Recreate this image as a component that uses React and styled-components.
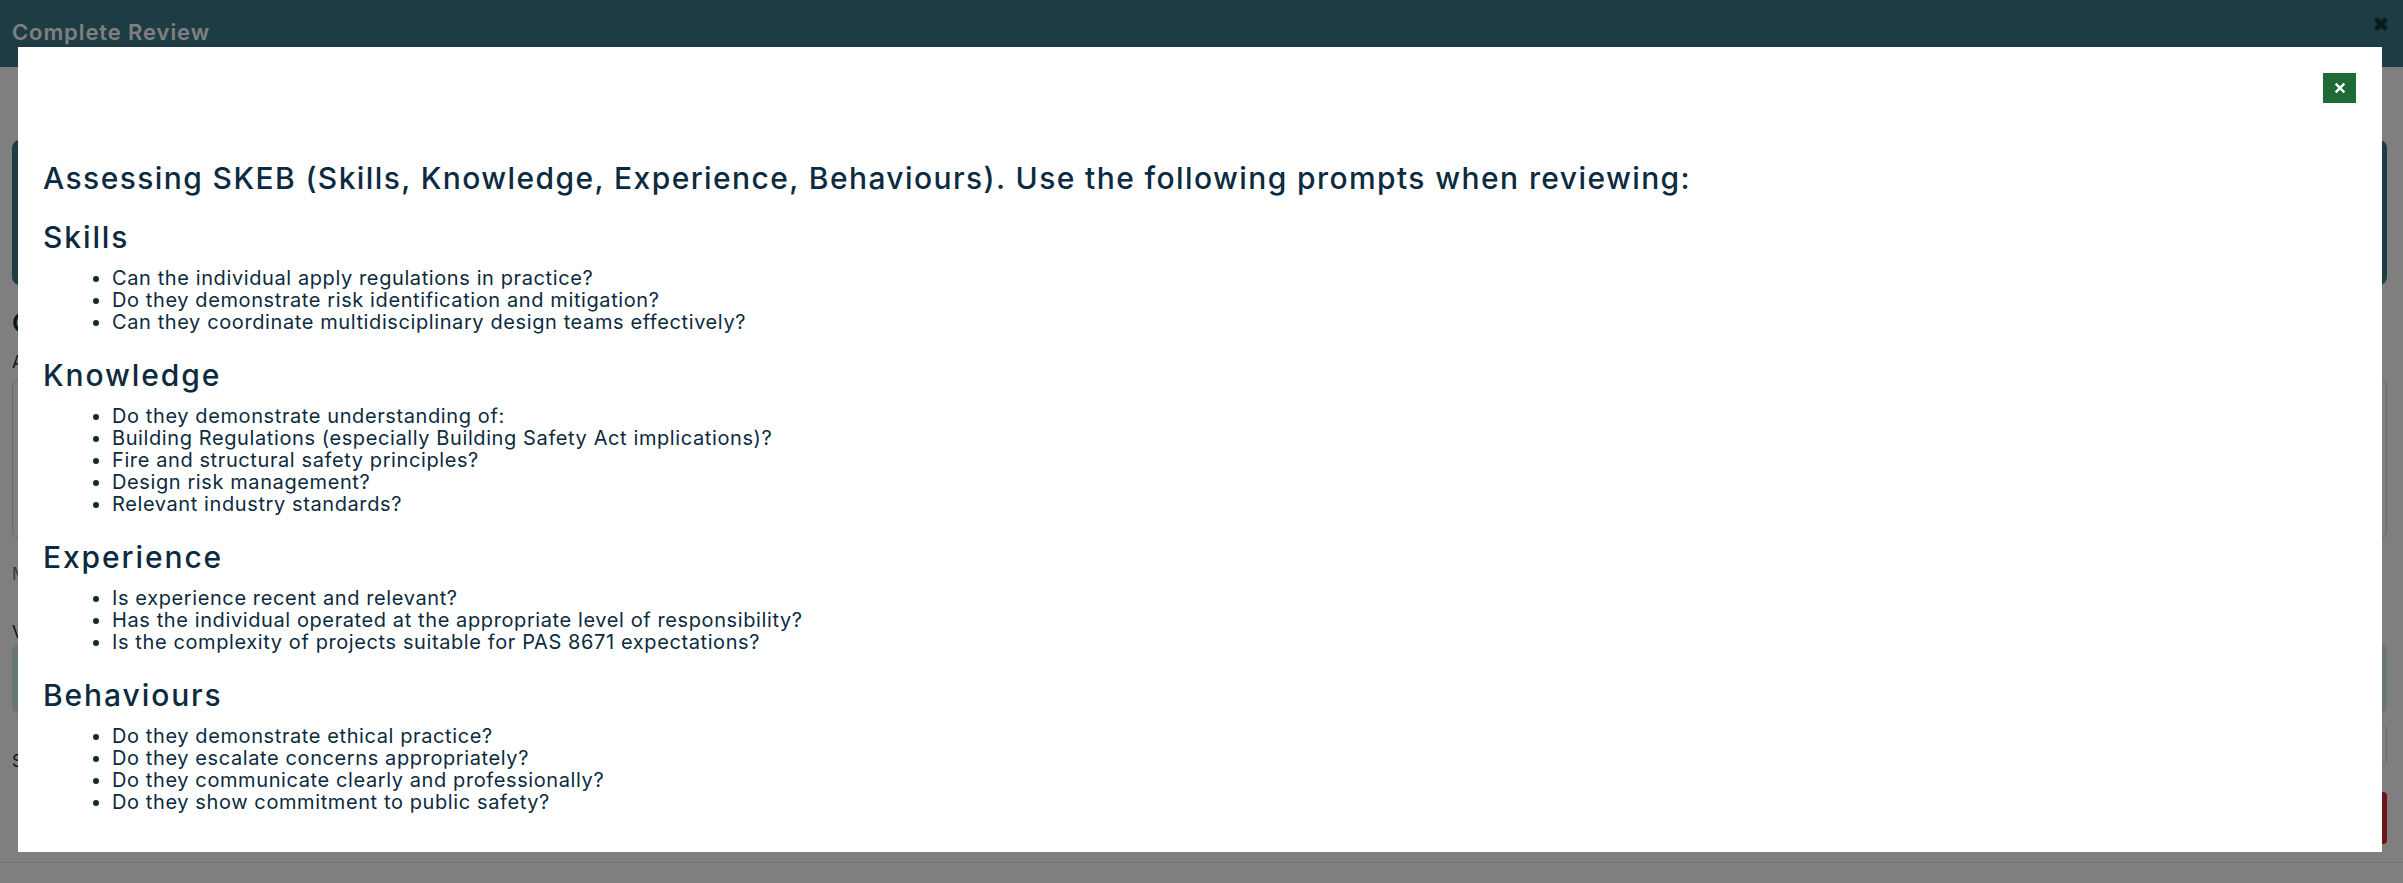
import React from 'react'
import styled, { createGlobalStyle } from 'styled-components'

const TEXT_COLOR = '#0c2b40'

const GlobalStyle = createGlobalStyle`
    html, body {
        margin: 0;
        padding: 0;
        background: #ffffff;
        font-family: Inter, "Noto Sans", sans-serif;
    }
`

const Page = styled.div`
    width: 100%;
    min-height: 883px;
    background: #ffffff;
`

const TopBar = styled.div`
    height: 67px;
    background: #3a7888;
    display: flex;
    align-items: flex-start;
    justify-content: space-between;
    padding: 0 16px 0 12px;
    box-sizing: border-box;
`

const TopTitle = styled.div`
    font-size: 22px;
    font-weight: 600;
    letter-spacing: 0.9px;
    color: #ffffff;
    line-height: 26px;
    padding-top: 19px;
`

const TopClose = styled.div`
    font-size: 19px;
    font-weight: 700;
    color: #16343a;
    padding-top: 13px;
    margin-right: -2px;
`

const Form = styled.div`
    padding: 73px 16px 0 12px;
    display: flex;
    flex-direction: column;
`

const Banner = styled.div`
    height: 145px;
    border-radius: 8px;
    background: #3a7888;
`

const SectionHeading = styled.div`
    margin-top: 22px;
    font-size: 26px;
    font-weight: 600;
    color: ${TEXT_COLOR};
`

const Label = styled.div`
    margin-top: ${p => p.gap || 12}px;
    font-size: 17px;
    color: ${p => p.muted ? '#6c757d' : TEXT_COLOR};
`

const TextArea = styled.div`
    margin-top: 8px;
    height: 158px;
    border: 1px solid #ced4da;
    border-radius: 6px;
    box-sizing: border-box;
`

const InfoBox = styled.div`
    margin-top: 2px;
    height: 69px;
    border-radius: 6px;
    background: #d1ecf1;
`

const StatusRow = styled.div`
    margin-top: 26px;
    display: flex;
    justify-content: space-between;
    align-items: flex-start;
`

const SelectBox = styled.div`
    width: 320px;
    height: 42px;
    margin-top: -14px;
    border: 1px solid #ced4da;
    border-radius: 6px;
    box-sizing: border-box;
`

const ActionRow = styled.div`
    margin-top: 21px;
    display: flex;
    justify-content: flex-end;
`

const DangerButton = styled.div`
    width: 180px;
    height: 52px;
    background: #dc2832;
    border-radius: 4px;
`

const FooterLine = styled.div`
    margin: 18px -16px 0 -12px;
    border-top: 1px solid #dee2e6;
`

const Overlay = styled.div`
    position: fixed;
    inset: 0;
    background: rgba(0, 0, 0, 0.5);
`

const Modal = styled.div`
    position: fixed;
    top: 47px;
    left: 18px;
    right: 21px;
    bottom: 31px;
    background: #ffffff;
    display: flex;
    flex-direction: column;
    color: ${TEXT_COLOR};
`

const ModalTop = styled.div`
    display: flex;
    justify-content: flex-end;
    padding: 26px 26px 0 0;
`

const CloseButton = styled.button`
    width: 33px;
    height: 30px;
    border: none;
    padding: 0;
    background: #1f6b37;
    display: flex;
    align-items: center;
    justify-content: center;
    cursor: pointer;
`

const ModalBody = styled.div`
    padding: 0 25px;
`

const Title = styled.h2`
    margin: 57px 0 0 0;
    font-size: 30px;
    line-height: 36px;
    font-weight: 500;
    letter-spacing: 1.4px;
`

const Heading = styled.h3`
    margin: ${p => p.first ? 23 : 24}px 0 0 0;
    font-size: 30px;
    line-height: 36px;
    font-weight: 500;
    letter-spacing: 1.9px;
`

const List = styled.ul`
    margin: 12px 0 0 0;
    padding-left: 69px;
`

const Item = styled.li`
    font-size: 20px;
    line-height: 22px;
    letter-spacing: 0.6px;
`

const sections = [
    {
        title: 'Skills',
        items: [
            'Can the individual apply regulations in practice?',
            'Do they demonstrate risk identification and mitigation?',
            'Can they coordinate multidisciplinary design teams effectively?',
        ],
    },
    {
        title: 'Knowledge',
        items: [
            'Do they demonstrate understanding of:',
            'Building Regulations (especially Building Safety Act implications)?',
            'Fire and structural safety principles?',
            'Design risk management?',
            'Relevant industry standards?',
        ],
    },
    {
        title: 'Experience',
        items: [
            'Is experience recent and relevant?',
            'Has the individual operated at the appropriate level of responsibility?',
            'Is the complexity of projects suitable for PAS 8671 expectations?',
        ],
    },
    {
        title: 'Behaviours',
        items: [
            'Do they demonstrate ethical practice?',
            'Do they escalate concerns appropriately?',
            'Do they communicate clearly and professionally?',
            'Do they show commitment to public safety?',
        ],
    },
]

export default function App() {
    return (
        <>
            <GlobalStyle />
            <Page>
                <TopBar>
                    <TopTitle>Complete Review</TopTitle>
                    <TopClose>✖</TopClose>
                </TopBar>
                <Form>
                    <Banner />
                    <SectionHeading>Competency Review</SectionHeading>
                    <Label gap={14}>Assessor Comments</Label>
                    <TextArea />
                    <Label gap={26} muted>Minimum 50 characters</Label>
                    <Label gap={38}>Verdict</Label>
                    <InfoBox />
                    <StatusRow>
                        <Label gap={0}>Status</Label>
                        <SelectBox />
                    </StatusRow>
                    <ActionRow>
                        <DangerButton />
                    </ActionRow>
                    <FooterLine />
                </Form>
            </Page>
            <Overlay />
            <Modal>
                <ModalTop>
                    <CloseButton aria-label="Close">
                        <svg width="12" height="12" viewBox="0 0 12 12">
                            <path d="M2.5 2.5 L9.5 9.5 M9.5 2.5 L2.5 9.5" stroke="#ffffff" strokeWidth="2.4" strokeLinecap="square" />
                        </svg>
                    </CloseButton>
                </ModalTop>
                <ModalBody>
                    <Title>Assessing SKEB (Skills, Knowledge, Experience, Behaviours). Use the following prompts when reviewing:</Title>
                    {sections.map((s, i) => (
                        <React.Fragment key={s.title}>
                            <Heading first={i === 0}>{s.title}</Heading>
                            <List>
                                {s.items.map(t => <Item key={t}>{t}</Item>)}
                            </List>
                        </React.Fragment>
                    ))}
                </ModalBody>
            </Modal>
        </>
    )
}
